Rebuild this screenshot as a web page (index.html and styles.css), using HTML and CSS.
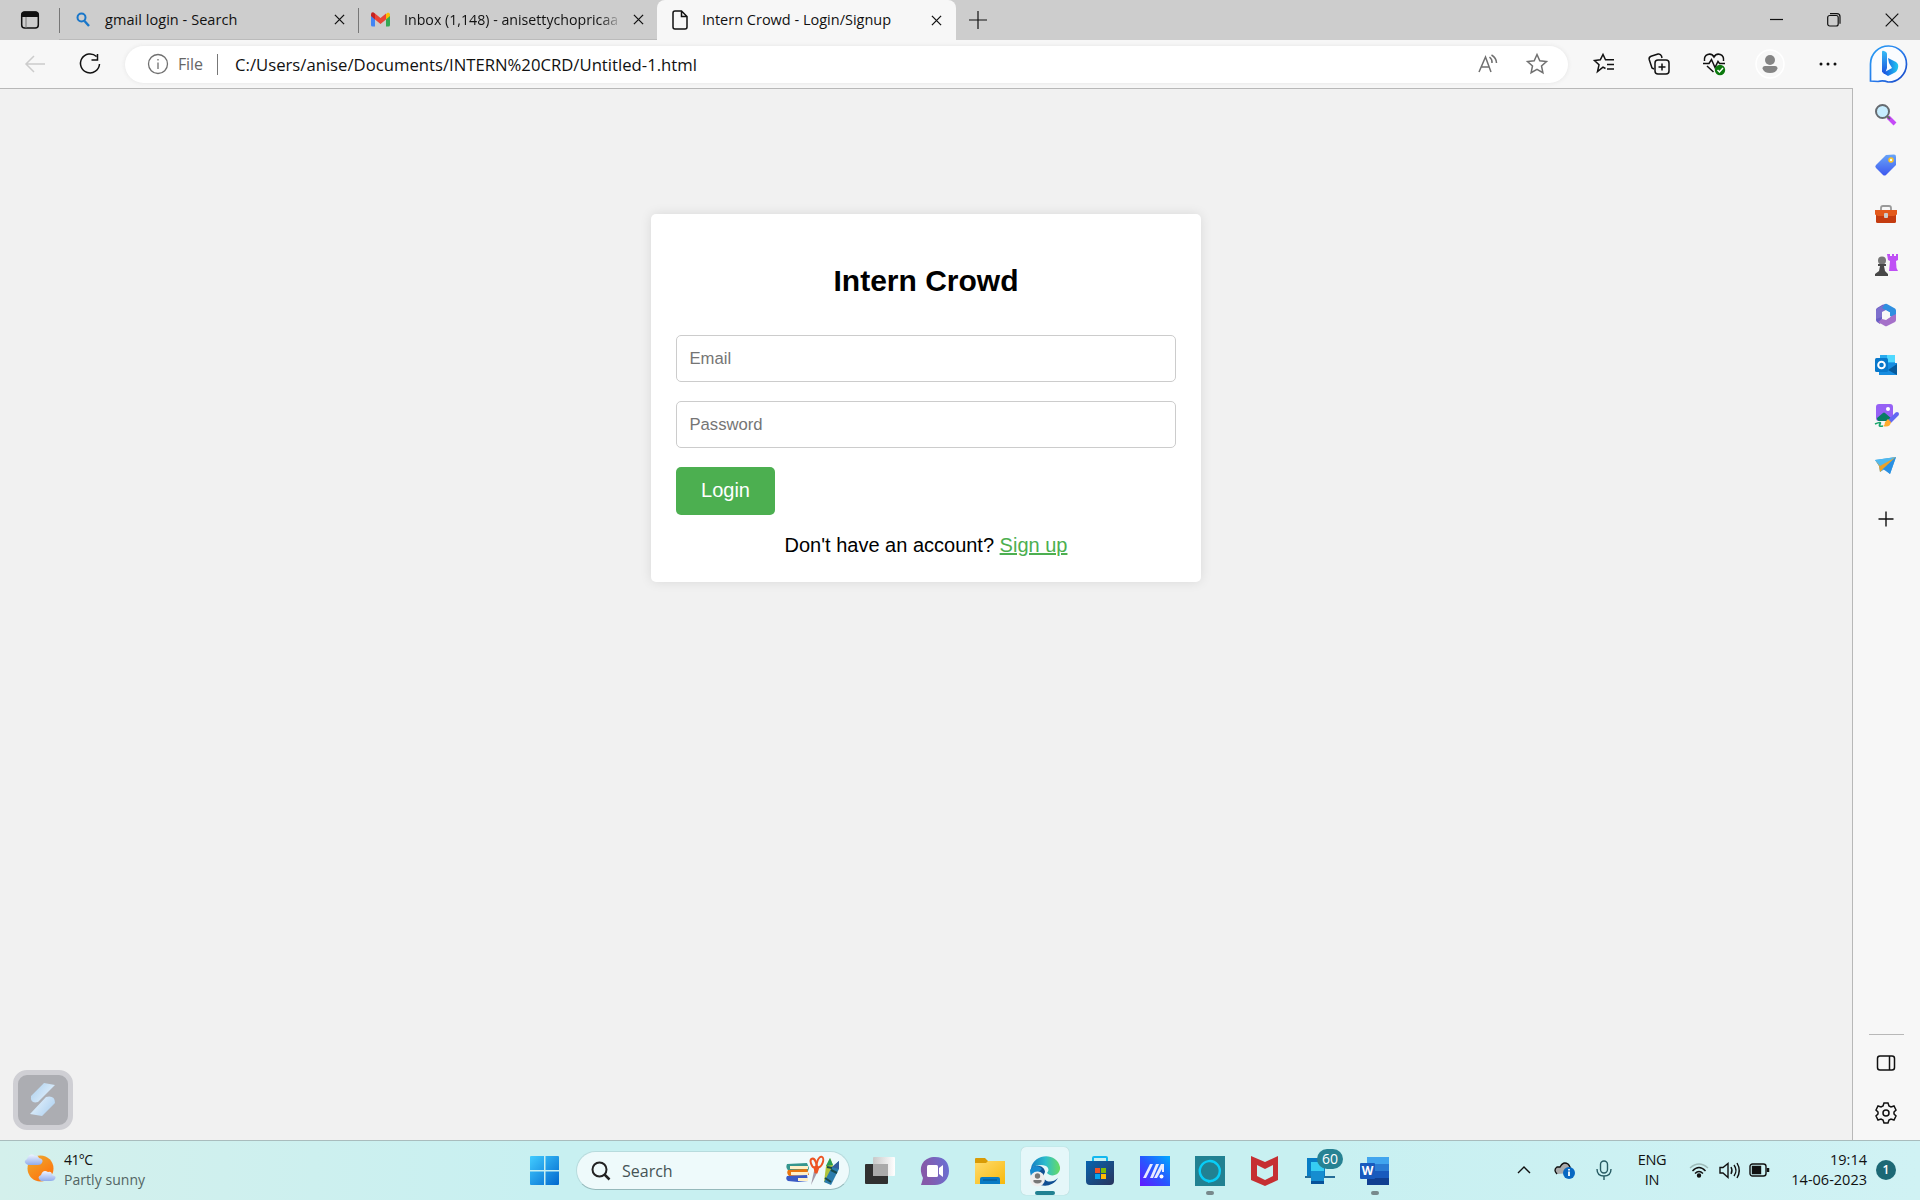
FILE: index.html
```html
<!DOCTYPE html>
<html lang="en">
<head>
<meta charset="utf-8">
<title>Intern Crowd - Login/Signup</title>
<link rel="stylesheet" href="styles.css">
</head>
<body>
<div class="desktop">
  <header class="tabs">
    <div class="tab-actions"><svg width="20" height="20" viewBox="0 0 20 20"><rect x="1.7" y="2" width="16.6" height="16" rx="3" fill="none" stroke="#111" stroke-width="1.5"/><path d="M1.5 7V4.500Q1.500 1.500 4.500 1.500h11q3 0 3 3V7z" fill="#111"/><path d="M6 7v11" stroke="#777"/></svg></div>
    <div class="tab tab-one">
      <svg width="14" height="15" viewBox="0 0 14 15" fill="none" stroke="#1976c9"><circle cx="5.500" cy="5.500" r="4" stroke-width="2"/><path d="M8.500 9l4.500 5" stroke-width="2.400"/></svg>
      <span class="tab-title t1">gmail login - Search</span>
      <svg class="close" viewBox="0 0 12 12"><path d="M1 1l10 10M11 1L1 11"/></svg>
    </div>
    <div class="tab tab-two">
      <svg width="19" height="15" viewBox="0 0 19 15"><path d="M0 2v11q0 1.500 1.500 1.500H4V6z" fill="#4285f4"/><path d="M15 6v8.500h2.500Q19 14.500 19 13V2z" fill="#34a853"/><path d="M15 2l2-1.500Q19 .5 19 3v1l-4 3.500z" fill="#fbbc04"/><path d="M4 1.500L9.500 6 15 1.500v6L9.500 12 4 7.500z" fill="#ea4335"/><path d="M0 4V2.500Q0 0 2.200.3L4 1.500v6z" fill="#c5221f"/></svg>
      <span class="tab-title t2">Inbox (1,148) - anisettychopricaa</span>
      <svg class="close" viewBox="0 0 12 12"><path d="M1 1l10 10M11 1L1 11"/></svg>
    </div>
    <div class="tab tab-active">
      <svg width="16" height="20" viewBox="0 0 16 20" fill="none" stroke="#111" stroke-width="1.500"><path d="M3 1h6.500L15 6.500V17q0 2-2 2H3q-2 0-2-2V3q0-2 2-2zM9.500 1v5.500H15"/></svg>
      <span class="tab-title t3">Intern Crowd - Login/Signup</span>
      <svg class="close" viewBox="0 0 12 12"><path d="M1 1l10 10M11 1L1 11"/></svg>
    </div>
    <svg class="new-tab" viewBox="0 0 18 18"><path d="M9 0v18M0 9h18"/></svg>
    <div class="window-buttons">
      <svg width="14" height="14" viewBox="0 0 14 14"><path d="M1 6.500h13"/></svg>
      <svg width="14" height="14" viewBox="0 0 14 14"><rect x=".7" y="2.500" width="10.500" height="10.500" rx="2"/><path d="M3 .7h7q3 0 3 3v7"/></svg>
      <svg width="14" height="14" viewBox="0 0 14 14"><path d="M.7.7l12.600 12.600M13.300.7L.7 13.300"/></svg>
    </div>
  </header>

  <nav class="toolbar">
    <svg class="back" width="20" height="18" viewBox="0 0 20 18"><path d="M20 9H1M9 1L1 9l8 8"/></svg>
    <svg class="reload" width="22" height="22" viewBox="0 0 22 22"><path d="M17.500 3.500A9.500 9.500 0 1 0 20.500 11M18.500 1v6h-6"/></svg>
    <div class="address">
      <svg class="info" width="22" height="22" viewBox="0 0 22 22"><circle cx="11" cy="11" r="9.500"/><path d="M11 9.500V16M11 6v1.600"/></svg>
      <span class="scheme">File</span>
      <span class="url">C:/Users/anise/Documents/INTERN%20CRD/Untitled-1.html</span>
      <svg class="read" width="20" height="20" viewBox="0 0 20 20"><path d="M1 18L7.500 3 13 18M3.500 13h7.500M11.500 3q3 2.500 2.500 6M13.500 1q5 3 5 8"/></svg>
      <svg class="star" width="22" height="22" viewBox="0 0 22 22"><path d="M11 1.500l2.800 6.200 6.700.8-5 4.500 1.400 6.700L11 16.300l-5.900 3.400L6.500 13l-5-4.500 6.700-.8z"/></svg>
    </div>
    <div class="tools">
      <svg width="22" height="22" viewBox="0 0 22 22"><path d="M12.500 15.500L10 14.200l-5.500 4.300 1.500-6.700L1.500 7.500l5.800-.7L10 1.500l2.500 5.300H21M14 11.500h7M14 16h7"/></svg>
      <svg width="22" height="22" viewBox="0 0 22 22"><path d="M6 16l-2-1L1.200 6.500Q.7 4 3 3.200L10 1q2.500-.5 3.500 2l.5 2"/><rect x="7" y="7" width="14" height="14" rx="3"/><path d="M14 10.500v7M10.500 14h7"/></svg>
      <svg width="22" height="22" viewBox="0 0 22 22"><path d="M1.500 8C.5 1 8-1 11 4c3-5 10.500-3 9.500 4M0 10.500h6l2.500-4 3.500 8 3-6 1.500 2H22M4 13l6.500 6"/><circle cx="17" cy="17" r="5.200" fill="#0b790d" stroke="none"/><path d="M14.500 17l2 2 3.500-4" stroke="white"/></svg>
      <svg width="30" height="30" viewBox="0 0 30 30"><circle cx="15" cy="15" r="14" fill="#f8f8f8" stroke="#fff"/><g fill="#858585" stroke="none"><circle cx="15" cy="11" r="5"/><path d="M10 17h10q2.500 0 2.500 2.500Q21 24 15 24T7.500 19.500Q7.500 17 10 17z"/></g></svg>
      <svg width="18" height="6" viewBox="0 0 18 6"><g fill="#111" stroke="none"><circle cx="2" cy="3" r="1.500"/><circle cx="9" cy="3" r="1.500"/><circle cx="16" cy="3" r="1.500"/></g></svg>
      <svg class="bing" width="40" height="40" viewBox="0 0 40 40"><defs><linearGradient id="bing" x2="1" y2="1"><stop stop-color="#279ff5"/><stop offset=".55" stop-color="#2778ea"/><stop offset="1" stop-color="#1744c4"/></linearGradient><linearGradient id="bings" x2="0" y2="1"><stop stop-color="#36bdf6"/><stop offset="1" stop-color="#1c50dd"/></linearGradient><linearGradient id="bingb"><stop stop-color="#174be3"/><stop offset="1" stop-color="#20c9ef"/></linearGradient></defs><path d="M2.500 37V20A18 18 0 1 1 20 38Q15 36 10 37.500z" fill="#fafcff" stroke="url(#bing)" stroke-width="1.700"/><g stroke="none"><path d="M20 14l8 4q3 2 2 6-1 4-4 5l-6 3-5-3 9-5-3-5z" fill="url(#bingb)"/><path d="M14 8q0-2 2-1l2 1q1 1 1 2v14l-2 6-3-2z" fill="url(#bings)"/></g></svg>
    </div>
  </nav>

  <div class="workspace">
    <main class="page">
      <form class="card">
        <h2>Intern Crowd</h2>
        <input type="email" placeholder="Email">
        <input type="password" placeholder="Password">
        <button type="button">Login</button>
        <p>Don't have an account? <a href="#">Sign up</a></p>
      </form>
      <div class="floating-tool"><svg width="28" height="36" viewBox="0 0 28 36"><defs><linearGradient id="float" x2="1" y2="1"><stop stop-color="#a9ceed"/><stop offset=".5" stop-color="#d3e7f8"/><stop offset="1" stop-color="#a7ccee"/></linearGradient></defs><path d="M15 1l11 2L9 20q-8 2-7-6zM1 32l16-17q9-2 9 6L13 34z" fill="url(#float)"/></svg></div>
    </main>
    <aside class="sidebar">
      <svg viewBox="0 0 24 24"><path d="M14 14l7 7" stroke="#c54af7" stroke-width="4"/><path d="M13 13l3 3" stroke="#666" stroke-width="2"/><circle cx="8.500" cy="8.500" r="6.500" fill="#c7edff" stroke="#666b70" stroke-width="2"/></svg>
      <svg viewBox="0 0 24 24"><defs><linearGradient id="tag" x2="0" y2="1"><stop stop-color="#68a5f8"/><stop offset="1" stop-color="#3e58ef"/></linearGradient></defs><path d="M12 2l8-.5q2 0 2 2V12L12 22q-1.500 1-3 0l-7-7q-1.500-1.500 0-3z" fill="url(#tag)"/><circle cx="17" cy="7" r="2" fill="#eff" stroke="#ffc421" stroke-width="1.500"/></svg>
      <svg viewBox="0 0 24 24"><path d="M7 7V5q0-2 2-2h6q2 0 2 2v2" fill="none" stroke="#999" stroke-width="1.800"/><rect x="2" y="8" width="20" height="12" rx="1.500" fill="#c43c10"/><path d="M1 7h22v4.500L20 13H4l-3-1.500z" fill="#e35a1c"/><rect x="10" y="10" width="4" height="5" rx="1" fill="#ccc"/></svg>
      <svg viewBox="0 0 24 24"><path d="M13 1h3v2h2V1h2v2h2V1h2v6l-2 1 .5 7 1.500 3h-9l1-10-2-1z" fill="#bf50f5"/><circle cx="8" cy="7.500" r="4" fill="#777"/><path d="M4 11h8v2h-2l1 5 3 3v2H1v-2l4-3 1-5H4z" fill="#484848"/></svg>
      <svg viewBox="0 0 24 24"><path d="M12 1l-3.500.8L3 5q-1 .8-1 2v10q0 1.200 1 2l3 2 2-5V8z" fill="#6a5fc4"/><path d="M12 1L4 5q-2 1-2 3v8l6-2V9l8-4z" fill="#7d6fcd"/><path d="M11 1q1-.5 2 0l8 4.500q1 .8 1 2V16l-6-3V9.500L8 5z" fill="#2f8fe0"/><path d="M22 11v6q0 1-1 2l-8 4q-1 .5-2 0l-7-4 4-3 4 1 4-3z" fill="#a570c9"/><path d="M12 7.500l4 2.300v4.400l-4 2.300-4-2.300V9.800z" fill="#f7f7f7"/></svg>
      <svg viewBox="0 0 24 24"><path d="M6 2h15v10H6z" fill="#28aaee"/><path d="M13 2h8v7h-8z" fill="#50d9ff"/><path d="M5 10h18v12H5z" fill="#178ce0"/><path d="M14 17l9-6v11z" fill="#075a9c"/><rect x="1" y="5" width="13" height="14" rx="1.500" fill="#0878cb"/><circle cx="7.500" cy="12" r="3.300" fill="none" stroke="#fff" stroke-width="2"/></svg>
      <svg viewBox="0 0 24 24"><rect x="2" y="0" width="17" height="17" rx="3" fill="#9661f5"/><path d="M3 14l6-5q1-1 2 0l7 6q-1 2-3 2H5q-2 0-2-3z" fill="#087d64"/><circle cx="14" cy="5" r="2" fill="#fff"/><path d="M16 17l7-7" stroke="#6268f3" stroke-width="4" stroke-linecap="round"/><path d="M17 18l-3-3-3 3q0 3-2 4 7 2 8-4z" fill="#ffad2f"/><path d="M1 20q7-3 5 0-2 3 3 2" fill="none" stroke="#17a56b" stroke-width="1.700"/></svg>
      <svg viewBox="0 0 24 24"><path d="M1 6l21-3-6 17-5-5-5 3-1-6z" fill="#38a7ed"/><path d="M2 7l20-4-13 12-3 3-1-6z" fill="#eba129"/><path d="M1 6l21-3L6 12z" fill="#50b9ef"/><path d="M22 3l-6 17-7-5z" fill="#298fe2"/></svg>
      <svg class="side-plus" viewBox="0 0 24 24"><path d="M12 4.500v15M4.500 12h15"/></svg>
      <div class="side-bottom">
        <svg class="side-line" viewBox="0 0 24 24"><rect x="3.500" y="5" width="17" height="14" rx="2.500"/><path d="M15.500 5v14"/></svg>
        <svg class="side-line" viewBox="0 0 24 24"><path d="M9 5l1-3h4l1 3 2 1 3-1 2 4-2 2v2l2 2-2 4-3-1-2 1-1 3h-4l-1-3-2-1-3 1-2-4 2-2v-2L2 9l2-4 3 1z"/><circle cx="12" cy="12" r="3"/></svg>
      </div>
    </aside>
  </div>

  <footer class="taskbar">
    <div class="weather">
      <svg width="32" height="30" viewBox="0 0 32 30"><defs><linearGradient id="sun" x2=".7" y2="1"><stop stop-color="#ecad30"/><stop offset="1" stop-color="#ff720c"/></linearGradient><linearGradient id="cloud" x2="0" y2="1"><stop stop-color="#eef3ff"/><stop offset="1" stop-color="#91aceb"/></linearGradient></defs><circle cx="15.500" cy="15.500" r="13" fill="url(#sun)"/><path d="M3 12q-6-3-1-6Q5-1 10 3q3-1 4 2 5 1 3 5-1 2-4 2z" fill="url(#cloud)"/><path d="M16 28q-5-4 0-6 2-6 7-3 4-1 4 3 5 1 3 4-1 2-4 2z" fill="url(#cloud)"/></svg>
      <div><div class="temp">41°C</div><div class="forecast">Partly sunny</div></div>
    </div>
    <svg class="start" width="30" height="30" viewBox="0 0 30 30"><defs><linearGradient id="win" x2="1" y2="1"><stop stop-color="#42ccff"/><stop offset="1" stop-color="#0068ce"/></linearGradient></defs><path d="M1 0h13v14H0V1q0-1 1-1zM15.500 0H28q1 0 1 1v13H15.500zM0 15.500h14V29H1q-1 0-1-1zM15.500 15.500H29V28q0 1-1 1H15.500z" fill="url(#win)"/></svg>
    <div class="search">
      <svg width="20" height="20" viewBox="0 0 20 20" fill="none" stroke="#222"><circle cx="8.500" cy="8.500" r="7" stroke-width="2"/><path d="M13.500 13.500l5 5" stroke-width="2.500"/></svg>
      <span>Search</span>
      <svg class="stationery" width="56" height="30" viewBox="0 0 56 30"><path d="M2 8l20-1 2 5-1 3H4q-4-3-2-7z" fill="#35968e"/><path d="M3 14l19-1 2 6-20 1q-3-3-1-6z" fill="#e8750d"/><path d="M2 20l20-1 1 6-10 1-10-1q-3-2-1-5z" fill="#3b5bc5"/><path d="M5 10h18v3H5zM6 16h17v3H6zM13 22h10v3H13z" fill="#fff0c8"/><path d="M26 29l3-14 3 2z" fill="#a39aaa"/><g fill="none" stroke="#ed5423" stroke-width="2"><ellipse cx="28.500" cy="7" rx="2.500" ry="4.500" transform="rotate(-20 28.500 7)"/><ellipse cx="35" cy="6" rx="2.800" ry="5.500" transform="rotate(20 35 6)"/></g><path d="M30 11l1 6 2-6" fill="none" stroke="#ed5423" stroke-width="3"/><path d="M41 10l4-8 3 7-4 18-5-1z" fill="#b0c43b"/><path d="M41 10l4-8 3 7z" fill="#279b56"/><path d="M47 11l7-6v8l-8 16-7-3z" fill="#2b7cac"/><path d="M47 11l7-6v8z" fill="#345d9d"/><path d="M42 11l5 1M40 22l6 4M46 14l6 3" stroke="#174a4e" stroke-width="2"/></svg>
    </div>
    <div class="apps">
      <div class="app"><svg viewBox="0 0 30 30"><defs><linearGradient id="task"><stop stop-color="#c8c8c8"/><stop offset="1" stop-color="#fff"/></linearGradient></defs><rect x="0" y="8" width="23" height="20" rx="1" fill="#303030"/><rect x="8" y="1" width="22" height="19" rx="1" fill="url(#task)"/><path d="M8 8h15v12H8z" fill="#aaa"/></svg></div>
      <div class="app"><svg viewBox="0 0 30 30"><defs><linearGradient id="chat" x1=".1" y1=".2" x2="1"><stop stop-color="#855aaa"/><stop offset="1" stop-color="#6872d7"/></linearGradient></defs><path d="M3 22C-3 9 5 1 15 1s14 6 14 14-6 14-14 14H1q1-3 2-7z" fill="url(#chat)"/><rect x="7" y="9" width="11" height="12" rx="1.500" fill="#fff"/><path d="M19 12l4-3v12l-4-3z" fill="#fff"/></svg></div>
      <div class="app"><svg viewBox="0 0 30 30"><defs><linearGradient id="folder" x2="1" y2="1"><stop stop-color="#ffdb6d"/><stop offset="1" stop-color="#f8b90c"/></linearGradient></defs><path d="M0 3q0-1 1-1h9l3 3h16v8H0z" fill="#d99b06"/><path d="M0 7h11l2-2h17v23H0z" fill="url(#folder)"/><path d="M5 28v-5q0-2 2-2h16q2 0 2 2v5z" fill="#087ac4"/><path d="M8 24h14" stroke="#075185"/></svg></div>
      <div class="app app-active"><svg viewBox="0 0 30 30"><defs><linearGradient id="edge" x2="1"><stop stop-color="#137fc5"/><stop offset=".5" stop-color="#2dbdcc"/><stop offset="1" stop-color="#68dc63"/></linearGradient></defs><path d="M1 12C4-3 27-4 30 11c1 8-9 11-13 6 5-5-3-12-16-5z" fill="url(#edge)"/><path d="M1 12c7-5 14-1 14 4-5 9 6 13 13 6-7 12-24 9-27-3z" fill="#104f93"/><path d="M0 14c3-5 9-5 12-1-7 5-5 13 2 15C4 29 0 21 0 14z" fill="#168bd0"/><circle cx="7.500" cy="23" r="7.500" fill="#eee"/><circle cx="7.500" cy="20" r="2.700" fill="#777"/><path d="M3.500 24h8v2q-4 3-8 0z" fill="#777"/></svg><i></i></div>
      <div class="app"><svg viewBox="0 0 30 30"><defs><linearGradient id="store" x2="1" y2="1"><stop stop-color="#0864af"/><stop offset="1" stop-color="#29345c"/></linearGradient></defs><path d="M8 6V2q0-1 1-1h12q1 0 1 1v4" fill="none" stroke="#13b8ef" stroke-width="2"/><path d="M1 5h28v20q0 4-4 4H5q-4 0-4-4z" fill="url(#store)"/><path fill="#f35325" d="M10 12h5v5h-5z"/><path fill="#81bc06" d="M16 12h5v5h-5z"/><path fill="#05a6f0" d="M10 18h5v5h-5z"/><path fill="#ffba08" d="M16 18h5v5h-5z"/></svg></div>
      <div class="app"><svg viewBox="0 0 30 30"><defs><linearGradient id="asus" x1="0" y1="1" x2="1" y2="0"><stop stop-color="#6417ff"/><stop offset=".5" stop-color="#2757ff"/><stop offset="1" stop-color="#00aaff"/></linearGradient></defs><path d="M0 0h30v30H0z" fill="url(#asus)"/><path d="M3 22L10 8h3L6 22zM10 22l6-14h3l-6 14zM14 22l7-14h3v8h-2v-3l-5 9z" fill="#e8eaff"/><circle cx="21.500" cy="20.500" r="2" fill="#fff"/></svg></div>
      <div class="app"><svg viewBox="0 0 30 30"><path d="M0 0h30v30H0z" fill="#218192"/><path d="M14 25a10 10 0 1 1 4-.5l-4 1z" fill="none" stroke="#08cdf7" stroke-width="2.400"/></svg><i></i></div>
      <div class="app"><svg viewBox="0 0 30 30"><path d="M1 0l14 6 13-6v24l-13 6-14-6zM7 9v11l8 4 8-4V9l-8 4z" fill="#c62f32" fill-rule="evenodd"/></svg></div>
      <div class="app"><svg viewBox="0 0 30 30"><path d="M2 2h18v20H2z" fill="#087dc5"/><path d="M6 6h13v22H6z" fill="#36cdf2"/><path d="M0 20h30v2H0z" fill="#246d98"/><path d="M6 15h13v10H6z" fill="#168dd0"/><path d="M6 25h13v3H6z" fill="#06529a"/></svg><span class="count">60</span></div>
      <div class="app"><svg viewBox="0 0 30 30"><path d="M7 1h22v8H7z" fill="#41a5ee"/><path d="M7 8h22v8H7z" fill="#2b7cd3"/><path d="M7 15h22v8H7z" fill="#185abd"/><path d="M7 22h22v7H7z" fill="#103f91"/><rect x="0" y="7" width="15" height="16" rx="1" fill="#185abd"/><text x="7.500" y="18.500" text-anchor="middle" class="word-letter">W</text></svg><i></i></div>
    </div>
    <div class="tray">
      <svg class="chevron" width="14" height="8" viewBox="0 0 14 8"><path d="M1 7l6-6 6 6"/></svg>
      <svg width="21" height="18" viewBox="0 0 21 18"><path d="M3 13Q-1 9 3 6h3q3-6 8-3 1 1 2 3v6" fill="#aaa"/><circle cx="15" cy="12" r="6" fill="#0868c2" stroke="none"/><path d="M15 10.500V15M15 8v1.500" stroke="#fff" stroke-width="1.800"/></svg>
      <svg class="mic" width="16" height="20" viewBox="0 0 16 20"><rect x="4.500" y="1" width="7" height="12" rx="3.500"/><path d="M1 9q0 7 7 7t7-7M8 16v4"/></svg>
      <div class="lang">ENG<br>IN</div>
      <svg width="20" height="15" viewBox="0 0 20 15"><path d="M1 5Q10-3 19 5" stroke="#9dbbb9"/><path d="M3.500 8Q10 1 16.500 8M6 10.500q4-4 8 0"/><circle cx="10" cy="12.500" r="1.500" fill="#111"/></svg>
      <svg width="21" height="17" viewBox="0 0 21 17"><path d="M1 5.500h3L9 1.500v14L4 11H1zM12 5q2 3.500 0 7M15 3q4 5.500 0 11M18 1q4.500 7.500 0 15"/></svg>
      <svg width="21" height="14" viewBox="0 0 21 14"><rect x="1" y="1" width="16" height="12" rx="2.500"/><path d="M3.500 3.500h8v7h-8z" fill="#111"/><path d="M19 5v4" stroke-width="2.500"/></svg>
      <div class="clock">19:14<br>14-06-2023</div>
      <span class="notice">1</span>
    </div>
  </footer>
</div>
</body>
</html>
```
FILE: styles.css
```css
* { box-sizing: border-box; }
body { margin: 0; overflow: hidden; background: #f1f1f1; font-family: "Open Sans", "Noto Sans", sans-serif; color: #111; }
svg { display: block; flex: none; overflow: visible; }
.desktop { width: 1920px; height: 1200px; display: grid; grid-template-rows: 40px 48px 1052px 60px; }
.tabs { display: flex; align-items: center; background: #cdcdcd; }
.tab-actions { width: 59px; display: flex; justify-content: center; }
.tab { height: 40px; display: flex; align-items: center; }
.tab-one { width: 299px; padding: 0 13px 0 17px; }
.tab-two { width: 299px; padding: 0 13px; }
.tab-one, .tab-two { background: linear-gradient(#777, #777) 0 8px / 1px 25px no-repeat; border-bottom: 1px solid #bbb; }
.tab-active { width: 299px; padding: 0 14px 0 15px; background: #f7f7f7; border-radius: 8px 8px 0 0; }
.tab-title { font-size: 14.5px; white-space: nowrap; line-height: 22px; }
.t1 { margin-left: 15px; letter-spacing: .05px; }
.t2 { margin-left: 14px; width: 218px; font-size: 14.2px; mask-image: linear-gradient(90deg, #000 90%, transparent); }
.t3 { margin-left: 14px; }
.close { width: 11px; height: 11px; margin-left: auto; fill: none; stroke: #111; stroke-width: 1.4; }
.new-tab { width: 18px; height: 18px; margin-left: 13px; stroke: #111; stroke-width: 1.2; }
.window-buttons { margin-left: auto; display: flex; gap: 44px; padding-right: 22px; fill: none; stroke: #111; stroke-width: 1.2; }
.toolbar { display: flex; align-items: center; background: #f7f7f7; fill: none; stroke-width: 1.5; stroke: #111; }
.back { margin-left: 25px; stroke: #ccc; }
.reload { margin-left: 34px; }
.address { width: 1443px; height: 37px; margin-left: 24px; border-radius: 19px; background: #fff; box-shadow: 0 0 4px #e4e4e4; display: flex; align-items: center; padding: 0 20px 0 22px; font-size: 16px; stroke: #707070; }
.info { stroke-width: 1.3; }
.scheme { margin-left: 9px; color: #666; width: 40px; border-right: 1px solid #777; line-height: 21px; letter-spacing: -.15px; }
.url { margin-left: 17px; font-size: 16.7px; white-space: nowrap; }
.read { margin-left: auto; margin-right: 28px; }
.tools { width: 353px; display: grid; grid-template-columns: 71px 39px 71px 42px 73px 47px; align-items: center; justify-items: center; }
.workspace { display: grid; grid-template-columns: 1853px 67px; background: #f7f7f7; }
.page { border-top: 1px solid #b8b8b8; border-right: 1px solid #b8b8b8; background: #f1f1f1; display: flex; flex-direction: column; align-items: center; }
.card { width: 550px; height: 368px; margin-top: 125px; padding: 50px 25px 0; background: #fff; border-radius: 5px; box-shadow: 0 0 12px rgba(0, 0, 0, .1); color: #000; font: 20px/23px "Liberation Sans", Arial, sans-serif; }
.card h2 { margin: 0 0 37px; font-size: 30px; line-height: 34px; text-align: center; }
.card input { display: block; width: 500px; height: 47px; margin: 0 0 19px; padding: 12px 12.5px; border: 1px solid #ccc; border-radius: 5px; font: 16.667px "Liberation Sans", Arial, sans-serif; background: #fff; }
.card input::placeholder { color: #757575; }
.card button { display: block; width: 99px; height: 48px; padding: 0 0 2px; border: 0; border-radius: 5px; color: #fff; background: #4caf50; font: 20px "Liberation Sans", Arial, sans-serif; }
.card p { margin: 19px 0 0; text-align: center; }
.card a { color: #4caf50; }
.floating-tool { width: 60px; height: 60px; margin: auto auto 10px 13px; border: 5px solid #cfcfd4; border-radius: 14px; background: #acadb2; display: grid; place-items: center; }
.sidebar { display: flex; flex-direction: column; align-items: center; padding: 15px 1px 0 0; }
.sidebar svg { width: 24px; height: 24px; margin-bottom: 26.1px; fill: none; }
.side-plus { margin-top: 3px; stroke: #111; stroke-width: 1.4; }
.side-bottom { width: 35px; margin-top: auto; height: 106px; border-top: 1px solid #b8b8b8; display: flex; flex-direction: column; align-items: center; padding-top: 16px; }
.side-line { stroke: #111; stroke-width: 1.5; }
.taskbar { display: flex; align-items: center; border-top: 1px solid #a9bcbd; background: linear-gradient(90deg, #d4f0ec, #c8f0f1 28%, #c8f0f1 68%, #d0f2f4); }
.weather { width: 530px; display: flex; gap: 7px; padding: 0 0 2px 25px; font-size: 14px; line-height: 20px; }
.weather svg { margin-top: 3px; }
.temp { letter-spacing: -.6px; }
.forecast { color: #536563; letter-spacing: .05px; }
.search { width: 274px; height: 39px; margin: 0 6px 0 16px; border-radius: 20px; border: 1px solid #b7dbdd; border-bottom-color: #95b9bb; background: #eefafb; display: flex; align-items: center; padding: 0 8px 0 14px; font-size: 16px; color: #455355; }
.search span { margin-left: 11px; }
.stationery { margin-left: auto; }
.apps { display: flex; gap: 7px; }
.app { width: 48px; height: 48px; border-radius: 5px; position: relative; display: flex; justify-content: center; padding-top: 9px; }
.app svg { width: 30px; height: 30px; }
.app i { position: absolute; width: 8px; height: 4px; border-radius: 2px; left: 20px; bottom: 0; background: #78898c; }
.app-active { background: #e5f7f9; box-shadow: 0 0 1px #9bb; }
.app .word-letter { font: bold 12px "Open Sans", sans-serif; fill: #fff; }
.app-active i { width: 20px; left: 14px; background: #218192; }
.count { position: absolute; left: 21px; top: 2px; width: 26px; height: 20px; border-radius: 10px; background: #278293; color: #fff; font-size: 14px; line-height: 20px; text-align: center; }
.tray { margin-left: auto; width: 404px; display: grid; grid-template-columns: 27px 40px 40px 56px 38px 22px 38px 89px 54px; align-items: center; justify-items: center; fill: none; stroke: #111; stroke-width: 1.4; font-size: 14.5px; line-height: 20px; padding-bottom: 1px; }
.chevron { justify-self: start; }
.mic { stroke: #285c64; }
.lang { text-align: center; letter-spacing: -.3px; }
.clock { justify-self: end; text-align: right; white-space: nowrap; }
.notice { justify-self: start; margin-left: 9px; width: 20px; height: 20px; border-radius: 50%; background: #1d6875; color: #fff; font-size: 12px; font-weight: 600; line-height: 20px; text-align: center; }
```
